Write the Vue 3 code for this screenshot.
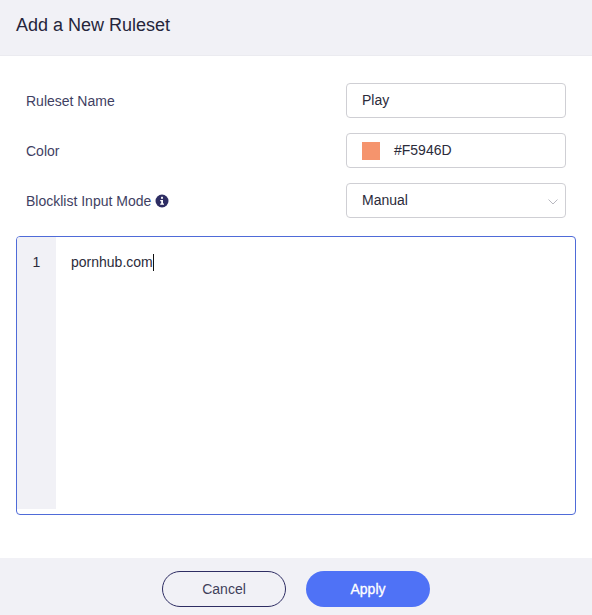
<script setup>
import { ref } from 'vue';

const name = ref('Play');
const color = ref('#F5946D');
const mode = ref('Manual');
const lines = ref(['pornhub.com']);
</script>

<template>
  <div class="dialog">
    <header class="dialog-header">Add a New Ruleset</header>

    <div class="dialog-body">
      <div class="form-row">
        <label class="form-label">Ruleset Name</label>
        <div class="field"><span class="field-text">{{ name }}</span></div>
      </div>
      <div class="form-row">
        <label class="form-label">Color</label>
        <div class="field">
          <span class="swatch" :style="{ background: color }"></span>
          <span class="field-text">{{ color }}</span>
        </div>
      </div>
      <div class="form-row form-row-last">
        <label class="form-label">
          Blocklist Input Mode
          <svg class="info-icon" viewBox="0 0 14 14" width="14" height="14">
            <circle cx="7" cy="7" r="6.5" fill="#2e2d63" />
            <rect x="6" y="2.8" width="2" height="2" rx="0.4" fill="#fff" />
            <path d="M5.2 6h2.8v3.6h1v1.2H5.2V9.6h1V7.2h-1z" fill="#fff" />
          </svg>
        </label>
        <div class="field">
          <span class="field-text">{{ mode }}</span>
          <svg class="chevron" viewBox="0 0 10 6" width="10" height="6">
            <path d="M0.5 0.5 5 5 9.5 0.5" fill="none" stroke="#b8b8c0" stroke-width="1" />
          </svg>
        </div>
      </div>

      <div class="editor">
        <div class="gutter">
          <div v-for="(line, i) in lines" :key="i" class="line-no">{{ i + 1 }}</div>
        </div>
        <div class="code">
          <div v-for="(line, i) in lines" :key="i" class="code-line">{{ line }}<span class="caret"></span></div>
        </div>
      </div>
    </div>

    <footer class="dialog-footer">
      <button class="btn btn-cancel">Cancel</button>
      <button class="btn btn-apply">Apply</button>
    </footer>
  </div>
</template>

<style>
html,
body {
  margin: 0;
  background: #fff;
}
</style>

<style scoped>
.dialog {
  width: 592px;
  height: 615px;
  display: flex;
  flex-direction: column;
  font-family: "Liberation Sans", Arial, sans-serif;
  font-size: 14px;
  color: #2b2b3a;
  overflow: hidden;
}

.dialog-header {
  height: 50px;
  flex: none;
  padding: 0 16px 5px;
  display: flex;
  align-items: center;
  background: #f1f1f6;
  border-bottom: 1px solid #ebebf0;
  font-size: 18px;
  color: #25253b;
}

.dialog-body {
  flex: 1;
  padding: 27px 16px 0;
}

.form-row {
  display: flex;
  align-items: center;
  justify-content: space-between;
  height: 35px;
  padding: 0 10px;
  margin-bottom: 15px;
}

.form-row-last {
  margin-bottom: 18px;
}

.form-label {
  display: flex;
  align-items: center;
  gap: 4px;
  color: #3f3f63;
}

.info-icon {
  display: block;
}

.field {
  width: 220px;
  height: 35px;
  box-sizing: border-box;
  padding: 0 15px;
  display: flex;
  align-items: center;
  position: relative;
  border: 1px solid #cfcfd4;
  border-radius: 4px;
  color: #2b2b3a;
}

.field-text {
  margin-bottom: 2px;
}

.swatch {
  width: 18px;
  height: 18px;
  margin-right: 14px;
}

.chevron {
  position: absolute;
  right: 7px;
  top: 15px;
}

.editor {
  height: 279px;
  display: flex;
  box-sizing: border-box;
  border: 1px solid #4f6bd8;
  border-radius: 4px;
  overflow: hidden;
}

.gutter {
  width: 39px;
  height: 272px;
  background: #f1f1f6;
  text-align: center;
  flex: none;
}

.line-no,
.code-line {
  height: 16px;
  line-height: 16px;
  margin-top: 17px;
}

.line-no {
  color: #2b2b3a;
}

.code {
  padding-left: 15px;
  flex: 1;
}

.code-line {
  color: #2b2b3a;
  display: flex;
  align-items: center;
}

.caret {
  width: 1px;
  height: 17px;
  background: #111;
}

.dialog-footer {
  height: 53px;
  padding-top: 4px;
  flex: none;
  display: flex;
  align-items: center;
  justify-content: center;
  gap: 20px;
  background: #f1f1f6;
}

.btn {
  width: 124px;
  height: 36px;
  box-sizing: border-box;
  border-radius: 18px;
  font-family: inherit;
  font-size: 14px;
  padding: 0;
}

.btn-cancel {
  background: transparent;
  border: 1px solid #2e2d63;
  color: #3f3f5a;
}

.btn-apply {
  background: #4f72f6;
  border: none;
  color: #fff;
  -webkit-text-stroke: 0.3px #fff;
}
</style>
